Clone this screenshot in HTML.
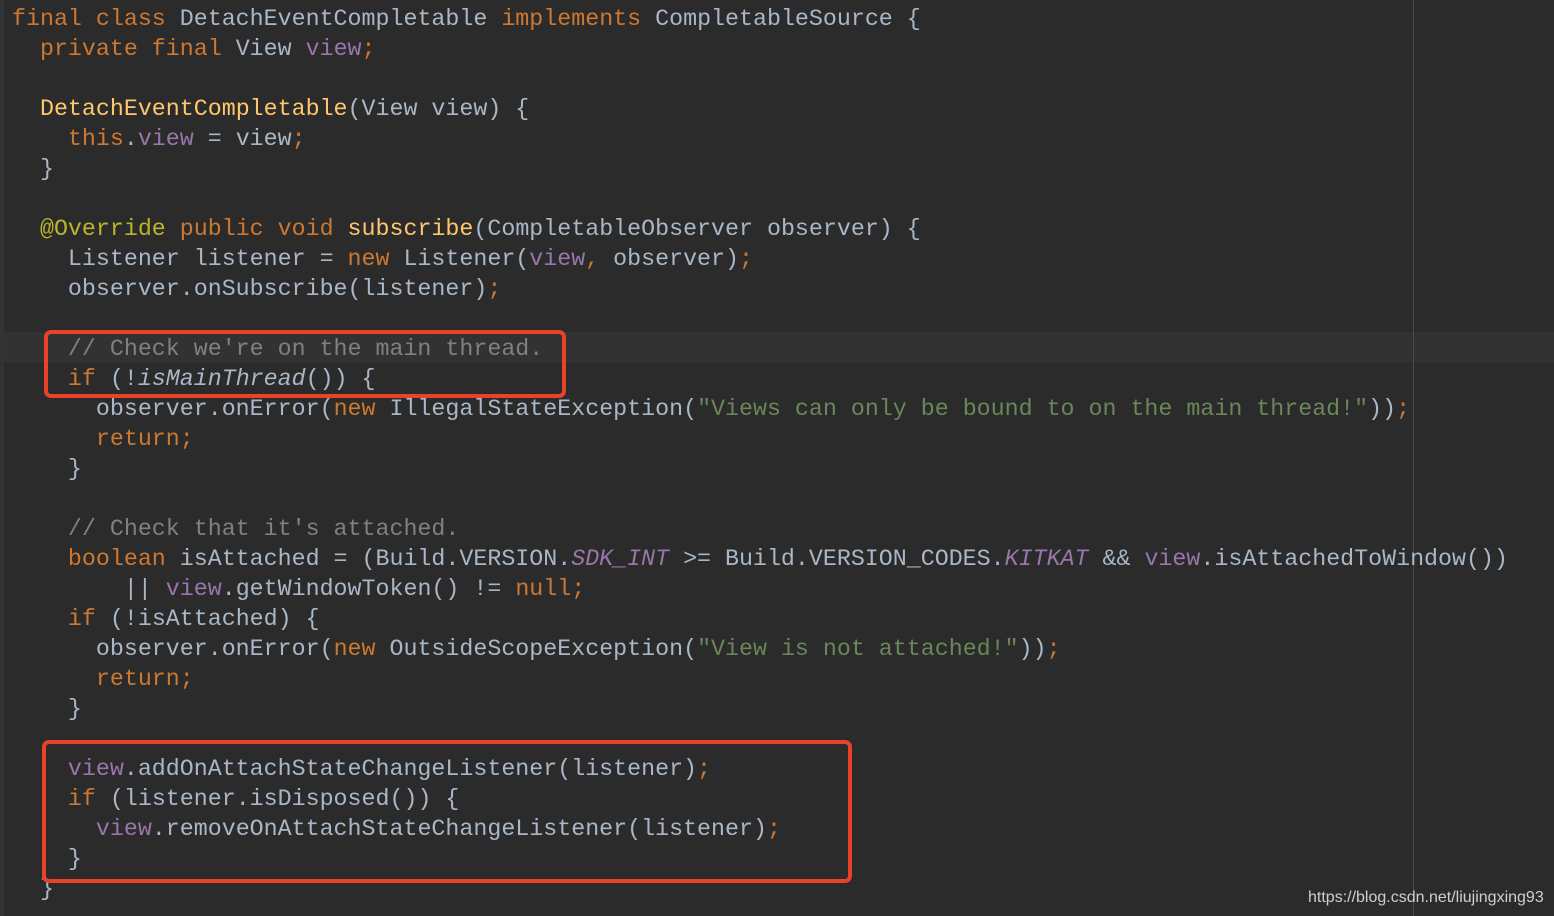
<!DOCTYPE html>
<html><head><meta charset="utf-8"><style>
html,body{margin:0;padding:0;width:1554px;height:916px;overflow:hidden;background:#2b2b2b}
.cur{position:absolute;left:0;top:332px;width:1554px;height:30px;background:#323232}
.vl{position:absolute;left:1413px;top:0;width:1px;height:916px;background:#4a4a4a}
.gut{position:absolute;left:0;top:0;width:4px;height:916px;background:#313335}
pre{position:absolute;left:12px;top:4px;margin:0;font-family:"Liberation Mono",monospace;font-size:23.3px;line-height:30px;color:#a9b7c6;white-space:pre}
.k{color:#cc7832}.f{color:#9876aa}.fi{color:#9876aa;font-style:italic}.s{color:#6a8759}.c{color:#808080}.m{color:#ffc66d}.a{color:#bbb529}.i{font-style:italic}
.box{position:absolute;border:4px solid #e8432a;border-radius:7px}
.wm{position:absolute;left:1308px;top:889px;font-family:"Liberation Sans",sans-serif;font-size:16px;color:#cfcfcf}
</style></head><body>
<div class="cur"></div><div class="gut"></div><div class="vl"></div>
<pre><span class="k">final class </span>DetachEventCompletable <span class="k">implements </span>CompletableSource {
  <span class="k">private final </span>View <span class="f">view</span><span class="k">;</span>

  <span class="m">DetachEventCompletable</span>(View view) {
    <span class="k">this</span>.<span class="f">view </span>= view<span class="k">;</span>
  }

  <span class="a">@Override </span><span class="k">public void </span><span class="m">subscribe</span>(CompletableObserver observer) {
    Listener listener = <span class="k">new </span>Listener(<span class="f">view</span><span class="k">, </span>observer)<span class="k">;</span>
    observer.onSubscribe(listener)<span class="k">;</span>

    <span class="c">// Check we're on the main thread.</span>
    <span class="k">if </span>(!<span class="i">isMainThread</span>()) {
      observer.onError(<span class="k">new </span>IllegalStateException(<span class="s">"Views can only be bound to on the main thread!"</span>))<span class="k">;</span>
      <span class="k">return;</span>
    }

    <span class="c">// Check that it's attached.</span>
    <span class="k">boolean </span>isAttached = (Build.VERSION.<span class="fi">SDK_INT </span>&gt;= Build.VERSION_CODES.<span class="fi">KITKAT </span>&amp;&amp; <span class="f">view</span>.isAttachedToWindow())
        || <span class="f">view</span>.getWindowToken() != <span class="k">null;</span>
    <span class="k">if </span>(!isAttached) {
      observer.onError(<span class="k">new </span>OutsideScopeException(<span class="s">"View is not attached!"</span>))<span class="k">;</span>
      <span class="k">return;</span>
    }

    <span class="f">view</span>.addOnAttachStateChangeListener(listener)<span class="k">;</span>
    <span class="k">if </span>(listener.isDisposed()) {
      <span class="f">view</span>.removeOnAttachStateChangeListener(listener)<span class="k">;</span>
    }
  }</pre>
<div class="box" style="left:44px;top:330px;width:514px;height:60px"></div>
<div class="box" style="left:42px;top:740px;width:802px;height:135px"></div>
<div class="wm">https://blog.csdn.net/liujingxing93</div>
</body></html>
